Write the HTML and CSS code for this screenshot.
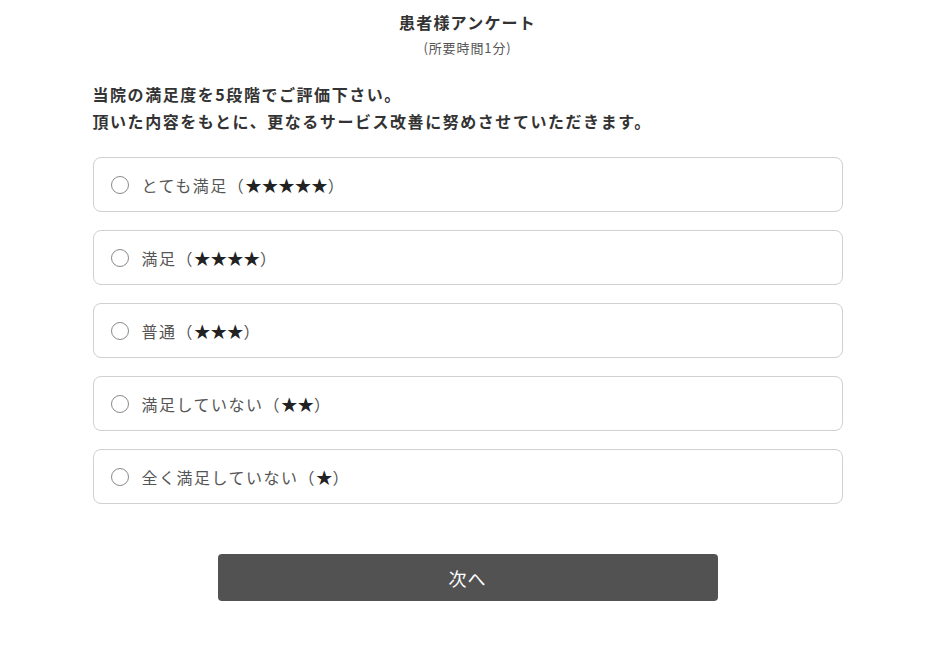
FILE: index.html
```html
<!DOCTYPE html>
<html lang="ja">
<head>
<meta charset="utf-8">
<title>患者様アンケート</title>
<link rel="stylesheet" href="styles.css">
</head>
<body>
<main class="survey">
  <header class="head">
    <h1 class="title">患者様アンケート</h1>
    <p class="sub">(所要時間1分)</p>
  </header>
  <p class="lead">当院の満足度を5段階でご評価下さい。<br>頂いた内容をもとに、更なるサービス改善に努めさせていただきます。</p>
  <ul class="options">
    <li class="option"><span class="radio"></span><span class="label">とても満足（<b class="stars">★★★★★</b>）</span></li>
    <li class="option"><span class="radio"></span><span class="label">満足（<b class="stars">★★★★</b>）</span></li>
    <li class="option"><span class="radio"></span><span class="label">普通（<b class="stars">★★★</b>）</span></li>
    <li class="option"><span class="radio"></span><span class="label">満足していない（<b class="stars">★★</b>）</span></li>
    <li class="option"><span class="radio"></span><span class="label">全く満足していない（<b class="stars">★</b>）</span></li>
  </ul>
  <div class="actions"><button class="next" type="button">次へ</button></div>
</main>
</body>
</html>
```
FILE: styles.css
```css
html, body { margin: 0; padding: 0; background: #fff; }
body {
  padding-left: 8px;
  font-family: "Noto Sans CJK JP", "Noto Sans", sans-serif;
  color: #333;
}
.survey {
  width: 750px;
  margin: 0 auto;
  padding-top: 10px;
}
.head { text-align: center; }
.title {
  margin: 0;
  font-size: 16px;
  line-height: 24px;
  font-weight: 700;
  letter-spacing: 1.2px;
  color: #333;
}
.sub {
  margin: 2px 0 0;
  font-size: 13px;
  line-height: 24px;
  letter-spacing: 0.9px;
  color: #555;
}
.lead {
  margin: 21px 0 0;
  font-size: 16px;
  line-height: 27px;
  font-weight: 700;
  letter-spacing: 1.55px;
  color: #333;
}
.options {
  list-style: none;
  margin: 22px 0 0;
  padding: 0;
  display: flex;
  flex-direction: column;
  gap: 18px;
}
.option {
  height: 53px;
  border: 1px solid #d0d0d0;
  border-radius: 8px;
  display: flex;
  align-items: center;
  padding-left: 17px;
}
.radio {
  box-sizing: border-box;
  width: 18px;
  height: 18px;
  border: 1.5px solid #8a8a8a;
  border-radius: 50%;
  margin-right: 13px;
  flex: none;
}
.label {
  font-size: 16px;
  color: #555;
  letter-spacing: 1.5px;
}
.stars {
  color: #222;
  font-weight: 700;
  font-family: "Noto Sans CJK JP", sans-serif;
  font-size: 16.5px;
  letter-spacing: 0;
}
.actions {
  display: flex;
  justify-content: center;
  margin-top: 50px;
}
.next {
  width: 500px;
  height: 47px;
  border: none;
  border-radius: 4px;
  background: #525252;
  color: #fff;
  font-family: "Noto Sans CJK JP", sans-serif;
  font-size: 18px;
  letter-spacing: 1px;
  cursor: pointer;
}
```
